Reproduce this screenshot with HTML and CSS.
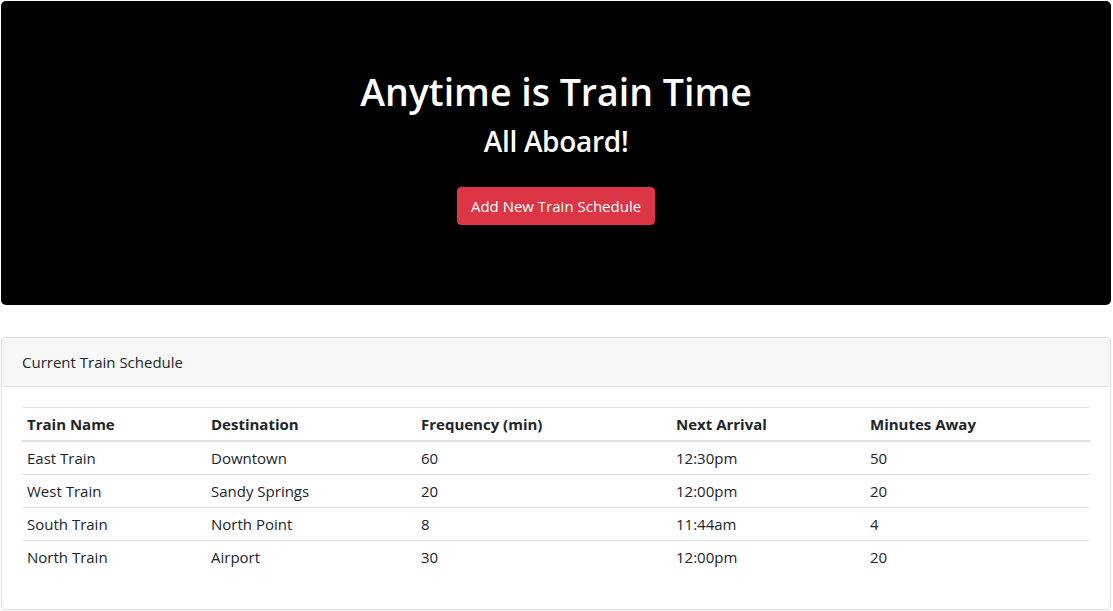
FILE: index.html
```html
<!DOCTYPE html>
<html lang="en">
<head>
<meta charset="utf-8">
<title>Anytime is Train Time</title>
<link rel="stylesheet" href="styles.css">
</head>
<body>
<div class="page">
  <header class="jumbotron">
    <h1 class="title">Anytime is Train Time</h1>
    <h2 class="subtitle">All Aboard!</h2>
    <p class="actions"><button class="btn-danger" type="button">Add New Train Schedule</button></p>
  </header>

  <section class="card">
    <div class="card-header">Current Train Schedule</div>
    <div class="card-body">
      <table class="schedule">
        <thead>
          <tr>
            <th class="c-name">Train Name</th>
            <th class="c-dest">Destination</th>
            <th class="c-freq">Frequency (min)</th>
            <th class="c-next">Next Arrival</th>
            <th class="c-away">Minutes Away</th>
          </tr>
        </thead>
        <tbody>
          <tr><td>East Train</td><td>Downtown</td><td>60</td><td>12:30pm</td><td>50</td></tr>
          <tr><td>West Train</td><td>Sandy Springs</td><td>20</td><td>12:00pm</td><td>20</td></tr>
          <tr><td>South Train</td><td>North Point</td><td>8</td><td>11:44am</td><td>4</td></tr>
          <tr><td>North Train</td><td>Airport</td><td>30</td><td>12:00pm</td><td>20</td></tr>
        </tbody>
      </table>
    </div>
  </section>
</div>
</body>
</html>
```

FILE: styles.css
```css
* { box-sizing: border-box; }

html, body {
  margin: 0;
  background: #fff;
}

body {
  font-family: "Open Sans", "Noto Sans", sans-serif;
  font-size: 15px;
  line-height: 24px;
  color: #212529;
}

.page {
  padding: 1px 2px 0 1px;
}

.jumbotron {
  background: #000;
  border-radius: 5px;
  padding: 67px 32px 64px;
  margin-bottom: 32px;
  text-align: center;
  color: #fff;
}

.title {
  margin: 0 0 6px;
  font-size: 37.5px;
  line-height: 48px;
  font-weight: 600;
}

.subtitle {
  margin: 0;
  font-size: 28px;
  line-height: 38px;
  font-weight: 600;
  letter-spacing: -0.3px;
}

.actions {
  margin: 27px 0 16px;
}

.btn-danger {
  display: inline-block;
  font-family: inherit;
  font-size: 15px;
  line-height: 24px;
  color: #fff;
  background: #dc3545;
  border: 1px solid #dc3545;
  border-radius: 4px;
  padding: 6px 12px;
  height: 38px;
  width: 198px;
  cursor: pointer;
}

.card {
  border: 1px solid #dfdfdf;
  border-radius: 4px;
  background: #fff;
}

.card-header {
  background: #f7f7f7;
  border-bottom: 1px solid #dfdfdf;
  padding: 12px 20px;
  border-radius: 4px 4px 0 0;
}

.card-body {
  padding: 20px;
}

.schedule {
  width: 100%;
  border-collapse: collapse;
  margin-bottom: 16px;
  table-layout: fixed;
}

.schedule th,
.schedule td {
  padding: 4px 5px;
  text-align: left;
  vertical-align: top;
  border-top: 1px solid #dee2e6;
}

.schedule th {
  font-weight: 700;
  border-bottom: 2px solid #dee2e6;
}

.c-name { width: 184px; }
.c-dest { width: 210px; }
.c-freq { width: 255px; }
.c-next { width: 194px; }
.c-away { width: 225px; }
```
